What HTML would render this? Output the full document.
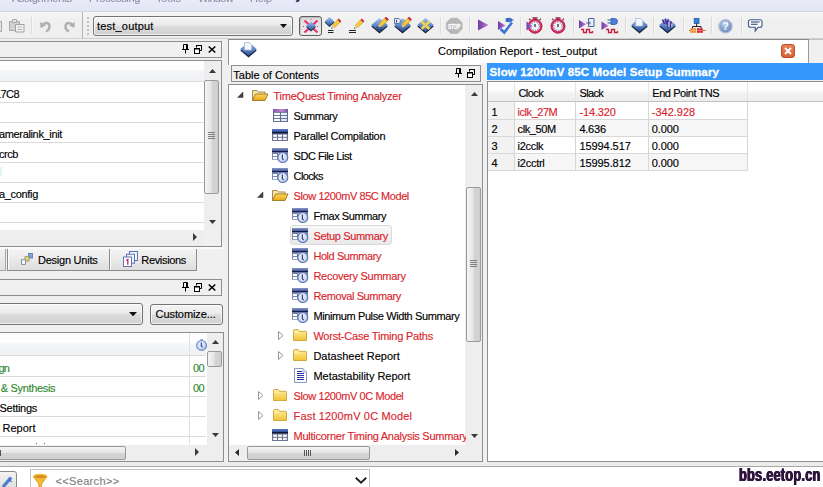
<!DOCTYPE html>
<html><head><meta charset="utf-8"><title>Compilation Report - test_output</title>
<style>
*{box-sizing:border-box;margin:0;padding:0}
html,body{width:823px;height:487px;overflow:hidden;background:#f0f0f0}
body{position:relative;font-family:"Liberation Sans",sans-serif;font-size:11px;color:#000}
.a{position:absolute}
.t{position:absolute;white-space:nowrap;line-height:13px;height:13px;-webkit-text-stroke:.15px}
.bx{position:absolute;border:1px solid #8e8e8e}
.hl{position:absolute;height:1px;background:#dadada}
.vl{position:absolute;width:1px;background:#e0e0e0}
.sb{position:absolute;background:#eeeeee}
.thumb{position:absolute;border:1px solid #9a9a9a;border-radius:2px}
.thv{background:linear-gradient(90deg,#f4f4f4 0%,#e6e6e6 45%,#d4d4d4 55%,#cfcfcf 100%)}
.thh{background:linear-gradient(180deg,#f4f4f4 0%,#e6e6e6 45%,#d4d4d4 55%,#cfcfcf 100%)}
.hdr{position:absolute;background:linear-gradient(#ffffff,#fdfdfe 42%,#f3f5f8 52%,#eff1f5)}
svg{position:absolute;overflow:visible}
</style></head><body>

<!-- ===== menubar ===== -->
<div class="a" style="left:0;top:0;width:823px;height:12px;background:linear-gradient(#e9ebf8,#e2e5f5);overflow:hidden">
 <div class="a" style="left:297px;top:-3px;width:3px;height:5px;background:#2a2e58;transform:skewX(-30deg);filter:blur(.4px)"></div>
 <div class="a" style="left:0;top:11px;width:823px;height:1px;background:#d4d7e8"></div>
</div>

<!-- ===== toolbar ===== -->
<div class="a" style="left:0;top:12px;width:823px;height:27px;background:linear-gradient(#f6f6f6,#f0f0f0 30%,#efefef);border-bottom:1px solid #cfcfcf"></div>
<div class="a" style="left:31px;top:17px;width:1px;height:17px;background:#dcdcdc;box-shadow:1px 0 0 #f8f8f8"></div>
<div class="a" style="left:82px;top:12px;width:1px;height:27px;background:#b4b4b4"></div>
<div class="a" style="left:87px;top:17px;width:2px;height:19px;background:repeating-linear-gradient(#c2c2c2 0 2px,transparent 2px 4px)"></div>
<!-- combo -->
<div class="a" style="left:93px;top:16px;width:200px;height:20px;border:1px solid #747474;border-radius:3px;background:linear-gradient(#f4f4f4,#ebebeb 45%,#dddddd 52%,#cfcfcf);box-shadow:inset 0 0 0 1px rgba(255,255,255,.7)"></div>
<svg style="left:280px;top:24px" width="7" height="4"><path d="M0 0h7L3.500 4z" fill="#111"/></svg>
<!-- toolbar separators -->
<div class="a" style="left:440px;top:17px;width:1px;height:17px;background:#dcdcdc;box-shadow:1px 0 0 #f8f8f8"></div>
<div class="a" style="left:469px;top:17px;width:1px;height:17px;background:#dcdcdc;box-shadow:1px 0 0 #f8f8f8"></div>
<div class="a" style="left:520px;top:17px;width:1px;height:17px;background:#dcdcdc;box-shadow:1px 0 0 #f8f8f8"></div>
<div class="a" style="left:573px;top:17px;width:1px;height:17px;background:#dcdcdc;box-shadow:1px 0 0 #f8f8f8"></div>
<div class="a" style="left:625px;top:17px;width:1px;height:17px;background:#dcdcdc;box-shadow:1px 0 0 #f8f8f8"></div>
<div class="a" style="left:653px;top:17px;width:1px;height:17px;background:#dcdcdc;box-shadow:1px 0 0 #f8f8f8"></div>
<div class="a" style="left:683px;top:17px;width:1px;height:17px;background:#dcdcdc;box-shadow:1px 0 0 #f8f8f8"></div>
<div class="a" style="left:711px;top:17px;width:1px;height:17px;background:#dcdcdc;box-shadow:1px 0 0 #f8f8f8"></div>
<div class="a" style="left:741px;top:17px;width:1px;height:17px;background:#dcdcdc;box-shadow:1px 0 0 #f8f8f8"></div>

<!-- ===== LEFT: navigator ===== -->
<div class="bx" style="left:-1px;top:41px;width:223px;height:17px"></div>
<div class="bx" style="left:-1px;top:60px;width:223px;height:187px;background:#fff"></div>
<div class="hdr" style="left:0;top:61px;width:204px;height:20px"></div>
<div class="hl" style="left:0;top:81px;width:204px"></div>
<div class="hl" style="left:0;top:102px;width:204px"></div>
<div class="hl" style="left:0;top:122px;width:204px"></div>
<div class="hl" style="left:0;top:142px;width:204px"></div>
<div class="hl" style="left:0;top:162px;width:204px"></div>
<div class="hl" style="left:0;top:182px;width:204px"></div>
<div class="hl" style="left:0;top:202px;width:204px"></div>
<div class="hl" style="left:0;top:222px;width:204px"></div>
<div class="a" style="left:0;top:167px;width:2px;height:9px;background:#e2f6ee"></div>
<!-- v scrollbar -->
<div class="sb" style="left:204px;top:61px;width:17px;height:169px"></div>
<div class="thumb thv" style="left:204px;top:80px;width:15px;height:114px"></div>
<div class="a" style="left:208px;top:132px;width:7px;height:8px;background:repeating-linear-gradient(#666 0 1px,transparent 1px 2px);opacity:.8"></div>
<svg style="left:209px;top:69px" width="7" height="4"><path d="M0 4h7L3.500 0z" fill="#3a3a3a"/></svg>
<svg style="left:209px;top:220px" width="7" height="4"><path d="M0 0h7L3.500 4z" fill="#3a3a3a"/></svg>
<!-- h scrollbar -->
<div class="sb" style="left:0;top:230px;width:221px;height:16px"></div>
<svg style="left:193px;top:233px" width="4" height="8"><path d="M0 0v8L4 4z" fill="#3a3a3a"/></svg>
<div class="a" style="left:203px;top:230px;width:18px;height:16px;background:#f0f0f0"></div>

<!-- tabs -->
<div class="a" style="left:0;top:247px;width:222px;height:2px;background:#fbfbfb"></div>
<div class="a" style="left:-3px;top:249px;width:9px;height:22px;border:1px solid #a8a8a8;border-top:none;background:linear-gradient(#f2f2f2,#e0e0e0)"></div>
<div class="a" style="left:7px;top:249px;width:103px;height:22px;border:1px solid #8c8c8c;border-top:none;background:linear-gradient(#f5f5f5,#ebebeb 45%,#dedede);box-shadow:inset 1px 0 0 #fafafa"></div>
<div class="a" style="left:109px;top:249px;width:88px;height:22px;border:1px solid #8c8c8c;border-top:none;background:linear-gradient(#f5f5f5,#ebebeb 45%,#dedede);box-shadow:inset 1px 0 0 #fafafa"></div>

<!-- ===== LEFT: tasks ===== -->
<div class="bx" style="left:-1px;top:279px;width:223px;height:17px"></div>
<div class="a" style="left:-5px;top:303px;width:148px;height:22px;border:1px solid #747474;border-radius:3px;background:linear-gradient(#f4f4f4,#ebebeb 45%,#dddddd 52%,#cfcfcf);box-shadow:inset 0 0 0 1px rgba(255,255,255,.7)"></div>
<svg style="left:129px;top:312px" width="8" height="4"><path d="M0 0h8L4 4.300z" fill="#111"/></svg>
<div class="a" style="left:150px;top:304px;width:73px;height:21px;border:1px solid #747474;border-radius:3px;background:linear-gradient(#f4f4f4,#ebebeb 45%,#dddddd 52%,#cfcfcf);box-shadow:inset 0 0 0 1px rgba(255,255,255,.7)"></div>
<div class="bx" style="left:-1px;top:332px;width:225px;height:130px;background:#fff"></div>
<div class="hdr" style="left:0;top:333px;width:206px;height:22px"></div>
<div class="hl" style="left:0;top:355px;width:206px"></div>
<div class="hl" style="left:0;top:376px;width:206px"></div>
<div class="hl" style="left:0;top:396px;width:206px"></div>
<div class="hl" style="left:0;top:416px;width:206px"></div>
<div class="hl" style="left:0;top:436px;width:206px"></div>
<div class="vl" style="left:189px;top:333px;height:112px"></div>
<div class="sb" style="left:207px;top:333px;width:16px;height:112px"></div>
<div class="thumb thv" style="left:207px;top:351px;width:15px;height:16px"></div>
<svg style="left:212px;top:340px" width="7" height="4"><path d="M0 4h7L3.500 0z" fill="#3a3a3a"/></svg>
<svg style="left:212px;top:433px" width="7" height="4"><path d="M0 0h7L3.500 4z" fill="#3a3a3a"/></svg>
<div class="sb" style="left:0;top:445px;width:223px;height:16px"></div>
<div class="thumb thh" style="left:-4px;top:446px;width:130px;height:14px"></div>
<svg style="left:195px;top:448px" width="4" height="8"><path d="M0 0v8L4 4z" fill="#3a3a3a"/></svg>
<div class="a" style="left:36px;top:443px;width:1px;height:1px;background:#666"></div><div class="a" style="left:44px;top:443px;width:1px;height:1px;background:#666"></div>
<div class="a" style="left:0;top:450px;width:1px;height:6px;background:#555"></div>

<!-- ===== bottom strip ===== -->
<div class="a" style="left:0;top:462px;width:823px;height:4px;background:#ececec"></div>
<div class="a" style="left:0;top:466px;width:823px;height:1px;background:#a8a8a8"></div>
<div class="a" style="left:0;top:467px;width:823px;height:20px;background:#fff"></div>
<div class="a" style="left:-4px;top:471px;width:21px;height:20px;border:1px solid #8a8a8a;border-radius:3px;background:linear-gradient(#f4f4f4,#dcdcdc)"></div>
<div class="a" style="left:30px;top:469px;width:340px;height:22px;border:1px solid #c4c4c4;background:#fff"></div>
<svg style="left:355px;top:477px" width="12" height="7"><path d="M.8.800l5.200 5 5.200-5" fill="none" stroke="#222" stroke-width="1.900"/></svg>
<span class="t" style="left:738.500px;top:465px;font-size:19px;line-height:20px;height:20px;font-weight:bold;color:#2e143c;transform-origin:0 0;transform:scaleX(.675);text-shadow:.7px 0 0 #2e143c,-.7px 0 0 #2e143c;letter-spacing:.3px">bbs.eetop.cn</span>

<!-- ===== report window ===== -->
<div class="a" style="left:228px;top:39px;width:595px;height:1px;background:#8a8a8a"></div>
<div class="a" style="left:228px;top:40px;width:581px;height:25px;background:#fff;border-left:1px solid #8e8e8e"></div>
<div class="a" style="left:808px;top:40px;width:1px;height:23px;background:#9a9a9a"></div>
<div class="a" style="left:809px;top:39px;width:14px;height:1px;background:#c4c4c4"></div>
<div class="a" style="left:481px;top:63px;width:6px;height:2px;background:#f0f0f0"></div>
<!-- close button -->
<div class="a" style="left:781px;top:44px;width:14px;height:14px;border:1px solid #b85030;border-radius:3px;background:linear-gradient(#ea8250,#d96232)"></div>
<svg style="left:784px;top:47px" width="8" height="8"><path d="M1 1l6 6M7 1l-6 6" stroke="#fff" stroke-width="2" fill="none"/></svg>
<!-- TOC header -->
<div class="bx" style="left:231px;top:65px;width:250px;height:17px;background:#f0f0f0"></div>
<!-- tree -->
<div class="bx" style="left:228px;top:84px;width:255px;height:378px;background:#fff"></div>
<div class="a" style="left:290px;top:225px;width:102px;height:20px;border:1px solid #dadada;border-radius:3px;background:linear-gradient(#f8f8f8,#e9e9e9)"></div>
<div class="sb" style="left:465px;top:85px;width:17px;height:360px"></div>
<div class="thumb thv" style="left:466px;top:187px;width:15px;height:155px"></div>
<div class="a" style="left:470px;top:260px;width:7px;height:7px;background:repeating-linear-gradient(#666 0 1px,transparent 1px 2px);opacity:.8"></div>
<svg style="left:471px;top:92px" width="7" height="4"><path d="M0 4h7L3.500 0z" fill="#3a3a3a"/></svg>
<svg style="left:471px;top:434px" width="7" height="4"><path d="M0 0h7L3.500 4z" fill="#3a3a3a"/></svg>
<div class="sb" style="left:229px;top:445px;width:253px;height:16px"></div>
<div class="thumb thh" style="left:247px;top:446px;width:123px;height:14px"></div>
<div class="a" style="left:304px;top:450px;width:7px;height:6px;background:repeating-linear-gradient(90deg,#555 0 1px,transparent 1px 2px)"></div>
<svg style="left:235px;top:449px" width="4" height="7"><path d="M4 0v7L0 3.500z" fill="#2a2a2a"/></svg>
<svg style="left:455px;top:449px" width="4" height="7"><path d="M0 0v7L4 3.500z" fill="#2a2a2a"/></svg>

<!-- right pane -->
<div class="a" style="left:487px;top:63px;width:336px;height:17px;background:#3397fb"></div>
<div class="bx" style="left:487px;top:81px;width:340px;height:381px;background:#fff"></div>
<div class="a" style="left:488px;top:82px;width:335px;height:19px;background:linear-gradient(#ffffff,#fefefe 40%,#f3f3f3 58%,#ededed)"></div>
<div class="a" style="left:488px;top:102px;width:26px;height:68px;background:#f2f2f2"></div>
<div class="a" style="left:515px;top:120px;width:232px;height:16px;background:#f6f6f6"></div>
<div class="a" style="left:515px;top:154px;width:232px;height:16px;background:#f6f6f6"></div>
<div class="hl" style="left:488px;top:101px;width:335px;background:#c2c2c2"></div>
<div class="hl" style="left:488px;top:119px;width:260px;background:#d8d8d8"></div>
<div class="hl" style="left:488px;top:136px;width:260px;background:#d8d8d8"></div>
<div class="hl" style="left:488px;top:153px;width:260px;background:#d8d8d8"></div>
<div class="hl" style="left:488px;top:170px;width:260px;background:#d8d8d8"></div>
<div class="vl" style="left:514px;top:82px;height:19px;background:#e6e6e6"></div><div class="vl" style="left:514px;top:102px;height:69px;background:#d6d6d6"></div>
<div class="vl" style="left:575px;top:82px;height:19px;background:#e6e6e6"></div><div class="vl" style="left:575px;top:102px;height:69px;background:#d6d6d6"></div>
<div class="vl" style="left:648px;top:82px;height:19px;background:#e6e6e6"></div><div class="vl" style="left:648px;top:102px;height:69px;background:#d6d6d6"></div>
<div class="vl" style="left:747px;top:82px;height:19px;background:#e6e6e6"></div><div class="vl" style="left:747px;top:102px;height:69px;background:#d6d6d6"></div>

<svg width="0" height="0" style="left:0;top:0">
<defs>
<linearGradient id="gDia" x1="0" y1="0" x2="0" y2="1"><stop offset="0" stop-color="#a9c6ee"/><stop offset=".55" stop-color="#5b86c8"/><stop offset="1" stop-color="#2c4f8e"/></linearGradient>
<linearGradient id="gPl" x1="0" y1="0" x2="1" y2="0"><stop offset="0" stop-color="#6a3aa6"/><stop offset="1" stop-color="#c47ad6"/></linearGradient>
<linearGradient id="gFo" x1="0" y1="0" x2="0" y2="1"><stop offset="0" stop-color="#fdf0a0"/><stop offset="1" stop-color="#f2c234"/></linearGradient>
<linearGradient id="gFo2" x1="0" y1="0" x2="0" y2="1"><stop offset="0" stop-color="#fbd860"/><stop offset="1" stop-color="#e8a818"/></linearGradient>
<linearGradient id="gTb" x1="0" y1="0" x2="0" y2="1"><stop offset="0" stop-color="#5f7fc4"/><stop offset="1" stop-color="#2c4a98"/></linearGradient>
<linearGradient id="gTp" x1="0" y1="0" x2="1" y2="0"><stop offset="0" stop-color="#7a5cb4"/><stop offset=".6" stop-color="#c684c8"/><stop offset="1" stop-color="#6a58b0"/></linearGradient>
<linearGradient id="gTb2" x1="0" y1="0" x2="0" y2="1"><stop offset="0" stop-color="#8a9ac6"/><stop offset="1" stop-color="#44569a"/></linearGradient>
<radialGradient id="gClk2" cx=".4" cy=".4" r=".65"><stop offset="0" stop-color="#f2f6fd"/><stop offset=".6" stop-color="#cfdcf2"/><stop offset="1" stop-color="#9fb6de"/></radialGradient>
<radialGradient id="gClk" cx=".4" cy=".35" r=".7"><stop offset="0" stop-color="#eaf3ff"/><stop offset="1" stop-color="#8fb4ea"/></radialGradient>
<radialGradient id="gHelp" cx=".4" cy=".3" r=".8"><stop offset="0" stop-color="#b4c8e6"/><stop offset="1" stop-color="#5f82b8"/></radialGradient>
<!-- pin 7x10 -->
<g id="pin"><path d="M1.5 0.5h4v5h-4zM0 5.5h7M3.5 6v3.5" fill="none" stroke="#000" stroke-width="1"/><path d="M4.5 1v4" stroke="#000" stroke-width="1"/></g>
<!-- restore 8x9 -->
<g id="rst"><path d="M2.5 2.5v-2h5v5h-2" fill="none" stroke="#000" stroke-width="1"/><path d="M2 0.5h6" stroke="#000" stroke-width="1"/><rect x=".5" y="3.5" width="5" height="5" fill="#fff" stroke="#000"/><path d="M0 4h6" stroke="#000" stroke-width="1"/></g>
<!-- close 8x7 -->
<g id="cls"><path d="M.7.5l6.6 6M7.3.5l-6.6 6" stroke="#000" stroke-width="1.5" fill="none"/></g>
<!-- diamond 17x16 with dark bottom -->
<g id="dia"><path d="M8.500 2L16.700 8.600 8.500 15.600.3 8.600z" fill="#16233f"/><path d="M8.500 0L16.800 7 8.500 13.700.2 7z" fill="url(#gDia)"/></g>
<!-- small diamond 10x10 -->
<g id="sdia"><path d="M5 .8L9.8 5.4 5 10 .2 5.4z" fill="#14223c"/><path d="M5 0L9.8 4.6 5 9 .2 4.6z" fill="url(#gDia)"/></g>
<!-- pencil: from top-right (8,0) to bottom-left (0,8) -->
<g id="pen"><path d="M6.2.6L9 3.4 3.2 9 .6 6.4z" fill="#f6c83a" stroke="#b8860b" stroke-width=".5"/><path d="M6.2.6L7.6-.8 10.4 2 9 3.4z" fill="#c8202c"/><path d="M.6 6.400L3.2 9-.8 10.400z" fill="#e8c8a0"/><path d="M-.8 10.400L.9 9.800-.2 8.700z" fill="#333"/></g>
<!-- open folder 16x12 -->
<g id="fop"><path d="M.5 11.500V1.500h4.500l1.500 1.500h6.500v2" fill="#f3e6b0" stroke="#a8884c"/><path d="M.5 11.500L3.500 5h12.500l-3 6.500z" fill="url(#gFo2)" stroke="#9a7420" stroke-width=".9"/></g>
<!-- closed folder 14x12 -->
<g id="fcl"><path d="M.5 11.500V1.800q0-1.300 1.300-1.300h3.400l1.300 1.800h6.200q.8 0 .8.800v8.400z" fill="url(#gFo)" stroke="#c9a236" stroke-width=".9"/><path d="M1 3.300h5.200" stroke="#fff6c8" stroke-width=".8"/></g>
<!-- table icon (blue) 16x12 -->
<g id="tbl"><rect x="0" y="0" width="16" height="12" fill="#6a7492"/><rect x="0" y="0" width="16" height="3" fill="url(#gTb)"/><rect x="0" y="3" width="16" height="1.400" fill="#0e1538"/><rect x="1.200" y="5.600" width="3.800" height="2.200" fill="#fff"/><rect x="6.100" y="5.600" width="3.800" height="2.200" fill="#fff"/><rect x="11" y="5.600" width="3.800" height="2.200" fill="#fff"/><rect x="1.200" y="8.800" width="3.800" height="2.200" fill="#fff"/><rect x="6.100" y="8.800" width="3.800" height="2.200" fill="#fff"/><rect x="11" y="8.800" width="3.800" height="2.200" fill="#eef"/></g>
<!-- summary icon (purple header) 15x13 -->
<g id="sum"><rect x="0" y="0" width="15" height="13" fill="#5f6a8e"/><rect x="0" y="0" width="15" height="3" fill="url(#gTp)"/><rect x="1.100" y="3.800" width="5.800" height="2.200" fill="#fff"/><rect x="8" y="3.800" width="5.900" height="2.200" fill="#e8f0ff"/><rect x="1.100" y="6.900" width="5.800" height="2.200" fill="#fff"/><rect x="8" y="6.900" width="5.900" height="2.200" fill="#e8f0ff"/><rect x="1.100" y="10" width="5.800" height="2.100" fill="#fff"/><rect x="8" y="10" width="5.900" height="2.100" fill="#dce8fc"/></g>
<!-- table+clock icon 16x15 -->
<g id="tck"><rect x="0" y="0" width="16" height="11.700" fill="#7584aa"/><rect x="0" y="0" width="16" height="3" fill="url(#gTb2)"/><rect x="0" y="3" width="16" height="1.100" fill="#131c4a"/><rect x="1" y="6" width="4" height="2" fill="#fff"/><rect x="1" y="9" width="4" height="2" fill="#fff"/><rect x="6.200" y="5.200" width="1.600" height="1.600" fill="#e8eefa"/><circle cx="10.800" cy="9.500" r="5" fill="url(#gClk2)" stroke="#6076b2" stroke-width="1.100"/><path d="M10.300 6.500v4l1.300 1.500" fill="none" stroke="#1c2a64" stroke-width="1.100"/></g>
<!-- doc icon 13x15 -->
<g id="doc"><path d="M.5.500h8.500l3.500 3.500v10.500h-12z" fill="#fff" stroke="#8a98c4"/><path d="M9 .5v3.500h3.500" fill="#dfe6f8" stroke="#8a98c4" stroke-width=".8"/><path d="M3 3.500h4.500M3 5.500h7M3 7.500h7M3 9.500h7M3 11.500h7" stroke="#2636a4" stroke-width="1" shape-rendering="crispEdges"/></g>
<!-- tri filled 6x6 ; tri hollow 5x9 -->
<g id="trf"><path d="M6 0v5.500H.5z" fill="#3c3c3c" stroke="#3c3c3c" stroke-width=".5"/></g>
<g id="trh"><path d="M.5.500v8l4.500-4z" fill="#fff" stroke="#969696" stroke-width="1"/></g>
<!-- stopwatch r=7 centered at 0,0 -->
<g id="sw"><path d="M-2.500-8.200h5M0-8v2" stroke="#8a2a48" stroke-width="1.300"/><path d="M4.500-6.300l1.400-1.200M-4.500-6.300l-1.400-1.200" stroke="#7a3a50" stroke-width="1.300"/><circle cx="0" cy="0" r="7" fill="#d83060" stroke="#b41c48" stroke-width="1"/><circle cx="0" cy="0" r="5" fill="#eef2fc"/><circle cx="0" cy="0" r="4.200" fill="none" stroke="#43304c" stroke-width="1" stroke-dasharray=".9 1.740"/><path d="M0-2.300v3" stroke="#222" stroke-width="1.200"/></g>
</defs></svg>

<!-- toolbar: disabled icons -->
<svg style="left:-10px;top:19px" width="14" height="14"><path d="M2.500 2.500h9v10h-9z" fill="#e2e2e2" stroke="#a8a8a8"/></svg>
<svg style="left:9px;top:19px" width="16" height="14" opacity=".95"><path d="M.5 2.500h10v9h-10z" fill="#cfcfcf" stroke="#a6a6a6"/><path d="M3.500.5h4v3h-4z" fill="#e6e6e6" stroke="#a6a6a6"/><path d="M6.500 5.500h8.500v7.500h-8.500z" fill="#f4f4f4" stroke="#9c9c9c"/><path d="M8.500 8h4.500M8.500 10.500h4.500" stroke="#b4b4b4"/></svg>
<svg style="left:40px;top:20px" width="12" height="12"><path d="M2 5.500C5 1.500 9.500 2.500 9.500 6.500 9.500 9 8 10.500 6 11.500" fill="none" stroke="#b0b0b0" stroke-width="2.400"/><path d="M0 2l.6 6 5.400-2.600z" fill="#b0b0b0"/></svg>
<svg style="left:63px;top:20px" width="12" height="12"><path d="M10 5.500C7 1.500 2.500 2.500 2.500 6.500 2.500 9 4 10.500 6 11.500" fill="none" stroke="#b0b0b0" stroke-width="2.400"/><path d="M12 2l-.6 6-5.400-2.600z" fill="#b0b0b0"/></svg>

<!-- pressed button + star -->
<div class="a" style="left:299px;top:16px;width:23px;height:20px;border:1px solid #5e5e5e;border-radius:3px;background:linear-gradient(#dcdcdc,#ececec);box-shadow:inset 1px 1px 1px rgba(0,0,0,.15)"></div>
<svg style="left:303px;top:19px" width="16" height="15"><path d="M1.500 1.500l13 12M14.500 1.500l-13 12" stroke="#e8326e" stroke-width="2.200"/><path d="M8 0v2M0 7.500h2M14 7.500h2" stroke="#e8326e" stroke-width="1" stroke-dasharray="1 1"/><use href="#sdia" x="3" y="2.500"/></svg>
<!-- diamond + pencil + = -->
<svg style="left:324px;top:17px" width="20" height="18"><use href="#sdia" x=".5" y="0"/><use href="#pen" x="8.500" y="2.500" transform="scale(.92)"/><path d="M4 13.500h5.500M4 15.500h5.500" stroke="#222" stroke-width="1"/></svg>
<svg style="left:347px;top:17px" width="20" height="18"><use href="#pen" x="8.500" y="2.500" transform="scale(.92)"/><path d="M2 13.500h7M2 15.500h7" stroke="#222" stroke-width="1"/></svg>
<!-- diamond+pencil -->
<svg style="left:371px;top:18px" width="18" height="17"><use href="#dia"/><path d="M5 9.500h6M4 11.500h8" stroke="#27406e" stroke-width="1"/><use href="#pen" x="7.500" y="-.5"/></svg>
<svg style="left:394px;top:18px" width="18" height="17"><use href="#dia"/><path d="M.5.500h4.500l2 2.500-2 2.500h-4.500z" fill="#dfe8f6" stroke="#5a6c94" stroke-width=".9"/><path d="M2.500 2v2.500" stroke="#34487c" stroke-width="1"/><use href="#pen" x="7.500" y="-.5"/></svg>
<svg style="left:417px;top:18px" width="18" height="17"><use href="#dia"/><path d="M4.500 3.500l8 7.500M12.500 3.500l-8 7.500" stroke="#f2d24a" stroke-width="2.600"/><path d="M8.500 0v14" stroke="#7f9cc8" stroke-width=".6" opacity=".6"/></svg>
<!-- STOP -->
<svg style="left:446px;top:18px" width="17" height="16"><path d="M4.800.3h6.800l4.500 4.500v6.200l-4.500 4.500H4.800L.3 11V4.800z" fill="#b7b7b7" stroke="#adadad" stroke-width=".6"/><text x="8.200" y="10.600" text-anchor="middle" font-family="Liberation Sans, sans-serif" font-weight="bold" font-size="7" fill="#fff" stroke="#fff" stroke-width=".3" textLength="12.500" lengthAdjust="spacingAndGlyphs">STOP</text></svg>
<!-- play -->
<svg style="left:478px;top:19px" width="11" height="12"><path d="M0 .5L10.500 6 0 11.500z" fill="url(#gPl)"/></svg>
<!-- play + check -->
<svg style="left:497px;top:17px" width="18" height="18"><path d="M1 4L8.500 8.500 1 13z" fill="url(#gPl)"/><path d="M3.500 12l3.800 3.500L15 5.500" fill="none" stroke="#3f74d4" stroke-width="2.600"/><ellipse cx="12" cy="3" rx="3.200" ry="2.200" fill="#3f74d4"/><path d="M8.500 2h3M8.500 4h3M14 3h2.500" stroke="#2d58ac" stroke-width="1"/></svg>
<!-- stopwatches -->
<svg style="left:526px;top:16px" width="18" height="19"><use href="#sw" x="9" y="10.200"/><path d="M.5 5.500l6 4.500-6 4.500z" fill="url(#gPl)"/></svg>
<svg style="left:549px;top:16px" width="18" height="19"><use href="#sw" x="9" y="10.200"/></svg>
<!-- play+doc+wave -->
<svg style="left:578px;top:17px" width="18" height="18"><path d="M1 3l7 4.200-7 4.200z" fill="url(#gPl)"/><path d="M10.500 1.500h5.500v8h-5.500z" fill="#e8f0fc" stroke="#4a6498" stroke-width="1"/><path d="M8 6h4M12 4.500v3" stroke="#4a6498" stroke-width=".9"/><path d="M3 12.500h2.500v3h3v-3h3v3h3v-1.500" fill="none" stroke="#c81e3c" stroke-width="1.300"/></svg>
<svg style="left:600px;top:17px" width="19" height="18"><path d="M1.500 4.500l7 4.200-7 4.200z" fill="url(#gPl)"/><path d="M11 1.500h3.500q3 0 3 3t-3 3h-3.500z" fill="#4a80d8" stroke="#2c58a8" stroke-width=".8"/><path d="M7.500 3h3.500M7.500 6h3.500" stroke="#2c58a8" stroke-width="1.100"/><path d="M6 12.500h2.500v3h3v-3h3v3h3v-1.500" fill="none" stroke="#c81e3c" stroke-width="1.300"/></svg>
<!-- diamond + doc -->
<svg style="left:631px;top:18px" width="18" height="17"><use href="#dia"/><path d="M4.700.5h5l2 2v5.500h-7z" fill="#f4f7fd" stroke="#a8b8d8" stroke-width=".8"/></svg>
<!-- diamond + hand -->
<svg style="left:659px;top:18px" width="18" height="17"><use href="#dia"/><path d="M3.500 1.500l2 4.500M6 .8l2 5.500M9 1.500v8M12 3.500v6.500" stroke="#4a2a98" stroke-width="1.700"/><path d="M9.800 4v5M12.800 5.500v4" stroke="#fff" stroke-width=".8"/></svg>
<!-- hierarchy -->
<svg style="left:689px;top:18px" width="17" height="16"><rect x="5.200" y=".5" width="4.800" height="5" fill="#2f7fdc" stroke="#1f5cac" stroke-width=".8"/><path d="M7.600 5.500v3M3.500 11V8.500h8.500V11" fill="none" stroke="#222" stroke-width="1"/><rect x="1.300" y="10.300" width="5.800" height="4.500" fill="#f08a28"/><rect x="8" y="10.300" width="5.800" height="4.500" fill="#d8202c"/><path d="M0 12.500h1.500M14 12.500h2.500" stroke="#c86428" stroke-width="1"/><path d="M4.200 10.300v4.500M1.300 12.500h5.800M10.900 10.300v4.500M8 12.500h5.800" stroke="#fff" stroke-width=".5" opacity=".6"/></svg>
<!-- help -->
<svg style="left:718px;top:19px" width="15" height="15"><circle cx="7.500" cy="7.300" r="6.600" fill="url(#gHelp)" stroke="#a8bcd8" stroke-width="1.200"/><text x="7.500" y="11" text-anchor="middle" font-family="Liberation Sans, sans-serif" font-weight="bold" font-size="10" fill="#fff">?</text></svg>
<!-- speech bubble -->
<svg style="left:748px;top:19px" width="15" height="13"><path d="M2.500.7h9.500q2 0 2 2v3.600q0 2-2 2h-2L7.200 12V8.300H2.500q-2 0-2-2V2.700q0-2 2-2z" fill="#fbfdff" stroke="#3c5688" stroke-width="1.100"/><path d="M3 3h8.500M3 5.300h6.500" stroke="#26345c" stroke-width="1.100"/></svg>

<!-- panel header icons -->
<svg style="left:182px;top:44px" width="8" height="10"><use href="#pin"/></svg>
<svg style="left:194px;top:45px" width="9" height="9"><use href="#rst"/></svg>
<svg style="left:208px;top:46px" width="8" height="7"><use href="#cls"/></svg>
<svg style="left:182px;top:282px" width="8" height="10"><use href="#pin"/></svg>
<svg style="left:194px;top:283px" width="9" height="9"><use href="#rst"/></svg>
<svg style="left:208px;top:284px" width="8" height="7"><use href="#cls"/></svg>
<svg style="left:455px;top:68px" width="8" height="10"><use href="#pin"/></svg>
<svg style="left:467px;top:69px" width="9" height="9"><use href="#rst"/></svg>

<!-- tab icons -->
<svg style="left:21px;top:253px" width="12" height="12"><rect x="7.500" y=".5" width="4" height="4.500" fill="#7fa4dc" stroke="#5478b4" stroke-width=".8"/><rect x="4" y="3.700" width="4" height="4.300" fill="#e8dc78" stroke="#8c8a5c" stroke-width=".8"/><rect x=".5" y="6.800" width="4" height="4.500" fill="#fff" stroke="#6c7898" stroke-width=".8"/></svg>
<svg style="left:123px;top:251px" width="16" height="16"><rect x="6.500" y=".5" width="8" height="9" fill="#f0f4fc" stroke="#4a68b0" stroke-width=".9"/><rect x="3.500" y="3.200" width="8" height="9" fill="#f0f4fc" stroke="#4a68b0" stroke-width=".9"/><rect x=".5" y="6" width="8" height="9.500" fill="#fff" stroke="#4a68b0" stroke-width=".9"/><path d="M3.300 9.500l1.500-1v5.200" fill="none" stroke="#c81e78" stroke-width="1.300"/></svg>

<!-- tasks header clock -->
<svg style="left:196px;top:339px" width="11" height="12"><circle cx="5.600" cy="6.400" r="4.900" fill="url(#gClk2)" stroke="#7390cc" stroke-width="1.200"/><path d="M4.300.8h2.600" stroke="#7390cc" stroke-width="1.200"/><path d="M5.300 3.600v3.400l1.200 1.200" fill="none" stroke="#1f3a8c" stroke-width="1.100"/></svg>

<!-- bottom: funnel, button icon -->
<svg style="left:33px;top:474px" width="15" height="14"><path d="M.5 2.800L5.800 10v4h2.800v-4L13.900 2.800z" fill="#f4bc30" stroke="#c08818" stroke-width=".7"/><ellipse cx="7.200" cy="2.700" rx="6.700" ry="2.300" fill="#d98a24" stroke="#f2c440" stroke-width="1.100"/></svg>
<svg style="left:1px;top:476px" width="12" height="12"><path d="M2 11L10 1.500" stroke="#4a7cd0" stroke-width="3.200"/><path d="M8 4l3 2" stroke="#2c58a8" stroke-width="1"/></svg>

<!-- report title icon -->
<svg style="left:240px;top:42px" width="17" height="16"><use href="#dia"/><path d="M4.500.5h5l2 2v5.500h-7z" fill="#f6f8fe" stroke="#a8b8d8" stroke-width=".8"/></svg>

<!-- tree icons -->
<svg style="left:237px;top:92px" width="7" height="7"><use href="#trf"/></svg>
<svg style="left:252px;top:89px" width="17" height="12"><use href="#fop"/></svg>
<svg style="left:273px;top:109px" width="15" height="13"><use href="#sum"/></svg>
<svg style="left:272px;top:129px" width="16" height="12"><use href="#tbl"/></svg>
<svg style="left:272px;top:148px" width="16" height="15"><use href="#tck"/></svg>
<svg style="left:272px;top:168px" width="16" height="15"><use href="#tck"/></svg>
<svg style="left:257px;top:192px" width="7" height="7"><use href="#trf"/></svg>
<svg style="left:272px;top:189px" width="17" height="12"><use href="#fop"/></svg>
<svg style="left:292px;top:208px" width="16" height="15"><use href="#tck"/></svg>
<svg style="left:292px;top:228px" width="16" height="15"><use href="#tck"/></svg>
<svg style="left:292px;top:248px" width="16" height="15"><use href="#tck"/></svg>
<svg style="left:292px;top:268px" width="16" height="15"><use href="#tck"/></svg>
<svg style="left:292px;top:288px" width="16" height="15"><use href="#tck"/></svg>
<svg style="left:292px;top:308px" width="16" height="15"><use href="#tck"/></svg>
<svg style="left:278px;top:331px" width="6" height="9"><use href="#trh"/></svg>
<svg style="left:293px;top:329px" width="14" height="12"><use href="#fcl"/></svg>
<svg style="left:278px;top:351px" width="6" height="9"><use href="#trh"/></svg>
<svg style="left:293px;top:349px" width="14" height="12"><use href="#fcl"/></svg>
<svg style="left:294px;top:368px" width="13" height="15"><use href="#doc"/></svg>
<svg style="left:258px;top:391px" width="6" height="9"><use href="#trh"/></svg>
<svg style="left:273px;top:389px" width="14" height="12"><use href="#fcl"/></svg>
<svg style="left:258px;top:411px" width="6" height="9"><use href="#trh"/></svg>
<svg style="left:273px;top:409px" width="14" height="12"><use href="#fcl"/></svg>
<svg style="left:272px;top:429px" width="16" height="12"><use href="#tbl"/></svg>

<span class="t" style="left:12.0px;top:-8px;color:#8d92aa;letter-spacing:-0.27px;filter:blur(.6px);">Assignments</span>
<span class="t" style="left:89.0px;top:-8px;color:#8d92aa;letter-spacing:-0.34px;filter:blur(.6px);">Processing</span>
<span class="t" style="left:156.0px;top:-8px;color:#8d92aa;letter-spacing:-0.14px;filter:blur(.6px);">Tools</span>
<span class="t" style="left:198.0px;top:-8px;color:#8d92aa;letter-spacing:-0.69px;filter:blur(.6px);">Window</span>
<span class="t" style="left:250.0px;top:-8px;color:#8d92aa;letter-spacing:-0.16px;filter:blur(.6px);">Help</span>
<span class="t" style="left:97.0px;top:20px;color:#000;letter-spacing:0.20px;">test_output</span>
<span class="t" style="left:438.0px;top:45px;color:#000;letter-spacing:0.02px;">Compilation Report - test_output</span>
<span class="t" style="left:233.3px;top:69px;color:#000;letter-spacing:0.00px;">Table of Contents</span>
<span class="t" style="left:273.5px;top:90px;color:#da1f2d;letter-spacing:-0.24px;">TimeQuest Timing Analyzer</span>
<span class="t" style="left:293.6px;top:110px;color:#000;letter-spacing:-0.49px;">Summary</span>
<span class="t" style="left:293.6px;top:130px;color:#000;letter-spacing:-0.31px;">Parallel Compilation</span>
<span class="t" style="left:293.6px;top:150px;color:#000;letter-spacing:-0.48px;">SDC File List</span>
<span class="t" style="left:293.6px;top:170px;color:#000;letter-spacing:-0.64px;">Clocks</span>
<span class="t" style="left:293.6px;top:190px;color:#da1f2d;letter-spacing:-0.42px;">Slow 1200mV 85C Model</span>
<span class="t" style="left:313.4px;top:210px;color:#000;letter-spacing:-0.42px;">Fmax Summary</span>
<span class="t" style="left:313.4px;top:230px;color:#da1f2d;letter-spacing:-0.33px;">Setup Summary</span>
<span class="t" style="left:313.4px;top:250px;color:#da1f2d;letter-spacing:-0.43px;">Hold Summary</span>
<span class="t" style="left:313.4px;top:270px;color:#da1f2d;letter-spacing:-0.27px;">Recovery Summary</span>
<span class="t" style="left:313.4px;top:290px;color:#da1f2d;letter-spacing:-0.40px;">Removal Summary</span>
<span class="t" style="left:313.4px;top:310px;color:#000;letter-spacing:-0.39px;">Minimum Pulse Width Summary</span>
<span class="t" style="left:313.4px;top:330px;color:#da1f2d;letter-spacing:-0.21px;">Worst-Case Timing Paths</span>
<span class="t" style="left:313.4px;top:350px;color:#000;letter-spacing:0.01px;">Datasheet Report</span>
<span class="t" style="left:313.4px;top:370px;color:#000;letter-spacing:-0.01px;">Metastability Report</span>
<span class="t" style="left:293.6px;top:390px;color:#da1f2d;letter-spacing:-0.41px;">Slow 1200mV 0C Model</span>
<span class="t" style="left:293.6px;top:410px;color:#da1f2d;letter-spacing:0.15px;">Fast 1200mV 0C Model</span>
<div class="a" style="left:293.6px;top:430px;width:172.4px;height:13px;overflow:hidden"><span class="t" style="left:0;top:0;color:#da1f2d;letter-spacing:-0.27px;">Multicorner Timing Analysis Summary</span></div>
<span class="t" style="left:489.5px;top:66px;color:#fff;font-size:11.5px;letter-spacing:0.13px;font-weight:bold;-webkit-text-stroke:.3px #fff;">Slow 1200mV 85C Model Setup Summary</span>
<span class="t" style="left:518.4px;top:87px;color:#000;letter-spacing:-0.54px;">Clock</span>
<span class="t" style="left:579.6px;top:87px;color:#000;letter-spacing:-0.66px;">Slack</span>
<span class="t" style="left:652.3px;top:87px;color:#000;letter-spacing:-0.44px;">End Point TNS</span>
<span class="t" style="left:491.4px;top:106px;color:#000;letter-spacing:-1.02px;">1</span>
<span class="t" style="left:517.6px;top:106px;color:#da1f2d;letter-spacing:-0.46px;">iclk_27M</span>
<span class="t" style="left:579.4px;top:106px;color:#da1f2d;letter-spacing:-0.13px;">-14.320</span>
<span class="t" style="left:651.8px;top:106px;color:#da1f2d;letter-spacing:-0.00px;">-342.928</span>
<span class="t" style="left:491.4px;top:123px;color:#000;letter-spacing:-1.02px;">2</span>
<span class="t" style="left:517.6px;top:123px;color:#000;letter-spacing:-0.40px;">clk_50M</span>
<span class="t" style="left:579.4px;top:123px;color:#000;letter-spacing:-0.23px;">4.636</span>
<span class="t" style="left:651.8px;top:123px;color:#000;letter-spacing:-0.11px;">0.000</span>
<span class="t" style="left:491.4px;top:140px;color:#000;letter-spacing:-1.02px;">3</span>
<span class="t" style="left:517.6px;top:140px;color:#000;letter-spacing:-0.30px;">i2cclk</span>
<span class="t" style="left:579.4px;top:140px;color:#000;letter-spacing:-0.07px;">15994.517</span>
<span class="t" style="left:651.8px;top:140px;color:#000;letter-spacing:-0.11px;">0.000</span>
<span class="t" style="left:491.4px;top:157px;color:#000;letter-spacing:-1.02px;">4</span>
<span class="t" style="left:517.6px;top:157px;color:#000;letter-spacing:-0.25px;">i2cctrl</span>
<span class="t" style="left:579.4px;top:157px;color:#000;letter-spacing:-0.07px;">15995.812</span>
<span class="t" style="left:651.8px;top:157px;color:#000;letter-spacing:-0.11px;">0.000</span>
<span class="t" style="left:-5.0px;top:88px;color:#000;letter-spacing:-0.57px;">17C8</span>
<span class="t" style="left:-1.0px;top:128px;color:#000;letter-spacing:-0.35px;">ameralink_init</span>
<span class="t" style="left:-1.0px;top:148px;color:#000;letter-spacing:-0.45px;">crcb</span>
<span class="t" style="left:-1.0px;top:188px;color:#000;letter-spacing:-0.32px;">a_config</span>
<span class="t" style="left:38.0px;top:254px;color:#000;letter-spacing:-0.24px;">Design Units</span>
<span class="t" style="left:141.3px;top:254px;color:#000;letter-spacing:-0.33px;">Revisions</span>
<span class="t" style="left:155.6px;top:308px;color:#000;letter-spacing:-0.09px;">Customize...</span>
<span class="t" style="left:-1.5px;top:362px;color:#2f8a2f;letter-spacing:-0.78px;">gn</span>
<span class="t" style="left:0.8px;top:382px;color:#2f8a2f;letter-spacing:-0.33px;">&amp; Synthesis</span>
<span class="t" style="left:-0.5px;top:402px;color:#000;letter-spacing:-0.28px;">Settings</span>
<span class="t" style="left:2.6px;top:422px;color:#000;letter-spacing:-0.02px;">Report</span>
<span class="t" style="left:193.0px;top:362px;color:#2f8a2f;letter-spacing:-0.53px;">00</span>
<span class="t" style="left:193.0px;top:382px;color:#2f8a2f;letter-spacing:-0.53px;">00</span>
<span class="t" style="left:55.5px;top:475px;color:#808080;letter-spacing:0.34px;">&lt;&lt;Search&gt;&gt;</span>
</body></html>
